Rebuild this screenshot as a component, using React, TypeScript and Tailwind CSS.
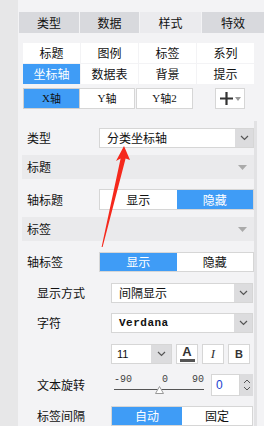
import type { FC, ReactNode } from "react";

const font = { fontFamily: '"Noto Sans CJK SC", "Noto Sans", sans-serif' };

const Chevron: FC = () => (
  <svg width="9" height="6" viewBox="0 0 9 6" fill="none">
    <path d="M1 1l3.5 3.5L8 1" stroke="#555" strokeWidth="1.2" />
  </svg>
);

const Select: FC<{ value: ReactNode; className?: string; mono?: boolean }> = ({ value, className = "", mono }) => (
  <div className={`flex h-full bg-white border border-[#d6d6d6] ${className}`}>
    <div className={`flex-1 flex items-center pl-[7px] ${mono ? "text-[11px] font-semibold tracking-[0.5px]" : "text-[12px]"} text-[#111]`}
      style={mono ? { fontFamily: '"Liberation Mono", monospace' } : undefined}>
      {value}
    </div>
    <div className="w-[18px] bg-[#dcdcde] flex items-center justify-center">
      <Chevron />
    </div>
  </div>
);

const Toggle: FC<{ on: 0 | 1; left: string; right: string; className?: string }> = ({ on, left, right, className = "" }) => (
  <div className={`flex h-full border border-[#d6d6d6] bg-white text-[12px] ${className}`}>
    <div className={`flex-1 flex items-center justify-center ${on === 0 ? "bg-[#3f9cf6] text-white" : "text-[#111]"}`}>{left}</div>
    <div className={`flex-1 flex items-center justify-center ${on === 1 ? "bg-[#3f9cf6] text-white" : "text-[#111]"}`}>{right}</div>
  </div>
);

const SectionHead: FC<{ title: string; className?: string }> = ({ title, className = "" }) => (
  <div className={`h-[24px] bg-[#eaeaec] flex items-center justify-between pl-[5px] pr-[7px] text-[12px] text-[#111] ${className}`}>
    <span>{title}</span>
    <svg width="9" height="5" viewBox="0 0 9 5"><path d="M0 0h9L4.5 5z" fill="#aaa" /></svg>
  </div>
);

const Row: FC<{ label: string; indent?: boolean; className?: string; children: ReactNode }> = ({ label, indent, className = "", children }) => (
  <div className={`flex items-center ${className}`}>
    <div className={`${indent ? "w-[89px] pl-[15px]" : "w-[77px] pl-[5px]"} text-[12px] text-[#111] shrink-0`}>{label}</div>
    <div className="flex-1 h-full">{children}</div>
  </div>
);

export default function App() {
  return (
    <div className="w-[264px] h-[426px] overflow-hidden flex relative" style={font}>
      <div className="w-[18px] bg-[#e7e7e8] shrink-0" />
      <div className="flex-1 bg-[#f3f3f5] flex flex-col">
        {/* main tabs */}
        <div className="mt-[12px] ml-[1px] flex gap-[1px] h-[25px] text-[12px] text-[#111]">
          <div className="w-[60px] bg-[#d8d9dd] flex items-center justify-center">类型</div>
          <div className="w-[59px] bg-[#d8d9dd] flex items-center justify-center">数据</div>
          <div className="w-[61px] bg-[#ebebee] flex items-center justify-center">样式</div>
          <div className="flex-1 bg-[#d8d9dd] flex items-center justify-center">特效</div>
        </div>

        {/* sub tabs */}
        <div className="mt-[10px] ml-[5px] w-[231px] grid grid-cols-4 gap-[1px] text-[12px] text-[#111]">
          {["标题", "图例", "标签", "系列", "坐标轴", "数据表", "背景", "提示"].map((t) => (
            <div key={t} className={`h-[20px] flex items-center justify-center ${t === "坐标轴" ? "bg-[#3f9cf6] text-white" : "bg-white"}`}>{t}</div>
          ))}
        </div>

        {/* axis buttons */}
        <div className="mt-[4px] ml-[5px] flex items-center h-[21px] text-[11px]">
          <div className="w-[57px] h-full bg-[#3f9cf6] border border-[#cfcfcf] flex items-center justify-center text-[#111]">
            <span style={{ fontFamily: '"Liberation Serif", serif' }}>X</span>轴
          </div>
          <div className="w-[55px] h-full bg-white border border-[#d6d6d6] border-l-0 flex items-center justify-center text-[#111]">
            <span style={{ fontFamily: '"Liberation Serif", serif' }}>Y</span>轴
          </div>
          <div className="w-[57px] h-full bg-white border border-[#d6d6d6] flex items-center justify-center text-[#111] ml-[1px]">
            <span style={{ fontFamily: '"Liberation Serif", serif' }}>Y</span>轴<span style={{ fontFamily: '"Liberation Serif", serif' }}>2</span>
          </div>
          <div className="ml-[22px] w-[30px] h-[21px] bg-white border border-[#d6d6d6] flex items-center justify-center gap-[2px]">
            <svg width="13" height="13" viewBox="0 0 13 13"><path d="M6.5 0v13M0 6.5h13" stroke="#333" strokeWidth="2.2" /></svg>
            <svg width="6" height="4" viewBox="0 0 6 4"><path d="M0 0h6L3 4z" fill="#999" /></svg>
          </div>
        </div>

        {/* form */}
        <div className="flex flex-1 mt-[9px]">
          <div className="ml-[4px] w-[232px] flex flex-col">
            <Row label="类型" className="h-[20px] mt-[10px]">
              <Select value="分类坐标轴" />
            </Row>
            <SectionHead title="标题" className="mt-[7px]" />
            <Row label="轴标题" className="h-[21px] mt-[10px]">
              <Toggle on={1} left="显示" right="隐藏" />
            </Row>
            <SectionHead title="标签" className="mt-[7px]" />
            <Row label="轴标签" className="h-[20px] mt-[11px]">
              <Toggle on={0} left="显示" right="隐藏" />
            </Row>
            <Row label="显示方式" indent className="h-[20px] mt-[11px]">
              <Select value="间隔显示" className="mr-[1px]" />
            </Row>
            <Row label="字符" indent className="h-[20px] mt-[10px]">
              <Select value="Verdana" mono className="mr-[1px]" />
            </Row>
            <Row label="" indent className="h-[20px] mt-[11px]">
              <div className="flex h-full gap-[4px]">
                <div className="w-[61px] h-full flex bg-white border border-[#d6d6d6]">
                  <div className="flex-1 flex items-center pl-[5px] text-[11px] text-[#111]" style={{ fontFamily: '"Liberation Sans", sans-serif' }}>11</div>
                  <div className="w-[20px] bg-[#dcdcde] flex items-center justify-center"><Chevron /></div>
                </div>
                <div className="w-[22px] h-full bg-white border border-[#d6d6d6] flex flex-col items-center justify-center">
                  <span className="text-[13px] leading-[12px] font-bold text-[#333]" style={{ fontFamily: '"Liberation Sans", sans-serif' }}>A</span>
                  <div className="w-[15px] h-[3px] bg-[#555] mt-[1px]" />
                </div>
                <div className="w-[22px] h-full bg-white border border-[#d6d6d6] flex items-center justify-center text-[13px] italic text-[#333]" style={{ fontFamily: '"Liberation Serif", serif' }}>I</div>
                <div className="w-[22px] h-full bg-white border border-[#d6d6d6] flex items-center justify-center text-[11px] font-bold text-[#333]" style={{ fontFamily: '"Liberation Sans", sans-serif' }}>B</div>
              </div>
            </Row>
            <Row label="文本旋转" indent className="h-[22px] mt-[10px]">
              <div className="flex h-full">
                <div className="w-[100px] flex flex-col pl-[3px]">
                  <div className="flex justify-between w-[90px] text-[10px] leading-[10px] text-[#444] mt-[1px]" style={{ fontFamily: '"Liberation Mono", monospace' }}>
                    <span>-90</span><span className="ml-[6px]">0</span><span>90</span>
                  </div>
                  <div className="relative w-[90px] h-[1px] bg-[#555] mt-[4px]">
                    <svg className="absolute left-[41px] top-[-3px]" width="9" height="8" viewBox="0 0 9 8">
                      <path d="M4.5 0.5L8.5 7.5H0.5z" fill="#fff" stroke="#999" />
                    </svg>
                  </div>
                </div>
                <div className="w-[29px] h-full bg-white border border-[#d6d6d6] flex items-center pl-[4px] text-[12px] text-[#1a3fd0]" style={{ fontFamily: '"Liberation Sans", sans-serif' }}>0</div>
                <div className="w-[13px] h-full bg-[#dcdcde] flex flex-col items-center justify-center gap-[2px]">
                  <svg width="8" height="5" viewBox="0 0 8 5"><path d="M1 4l3-3 3 3" stroke="#555" fill="none" /></svg>
                  <svg width="8" height="5" viewBox="0 0 8 5"><path d="M1 1l3 3 3-3" stroke="#555" fill="none" /></svg>
                </div>
              </div>
            </Row>
            <Row label="标签间隔" indent className="h-[20px] mt-[10px]">
              <Toggle on={0} left="自动" right="固定" className="mr-[1px]" />
            </Row>
          </div>
          <div className="w-[3px] mt-[3px] bg-[#e2e2e4]" />
        </div>
      </div>

      {/* red annotation arrow */}
      <svg className="absolute left-0 top-0 pointer-events-none" width="264" height="426" viewBox="0 0 264 426">
        <polygon points="124,146 130,160 125.6,158.5 102.6,247 101.6,247 120.6,158.5 116,161" fill="#f5281c" />
      </svg>
    </div>
  );
}
